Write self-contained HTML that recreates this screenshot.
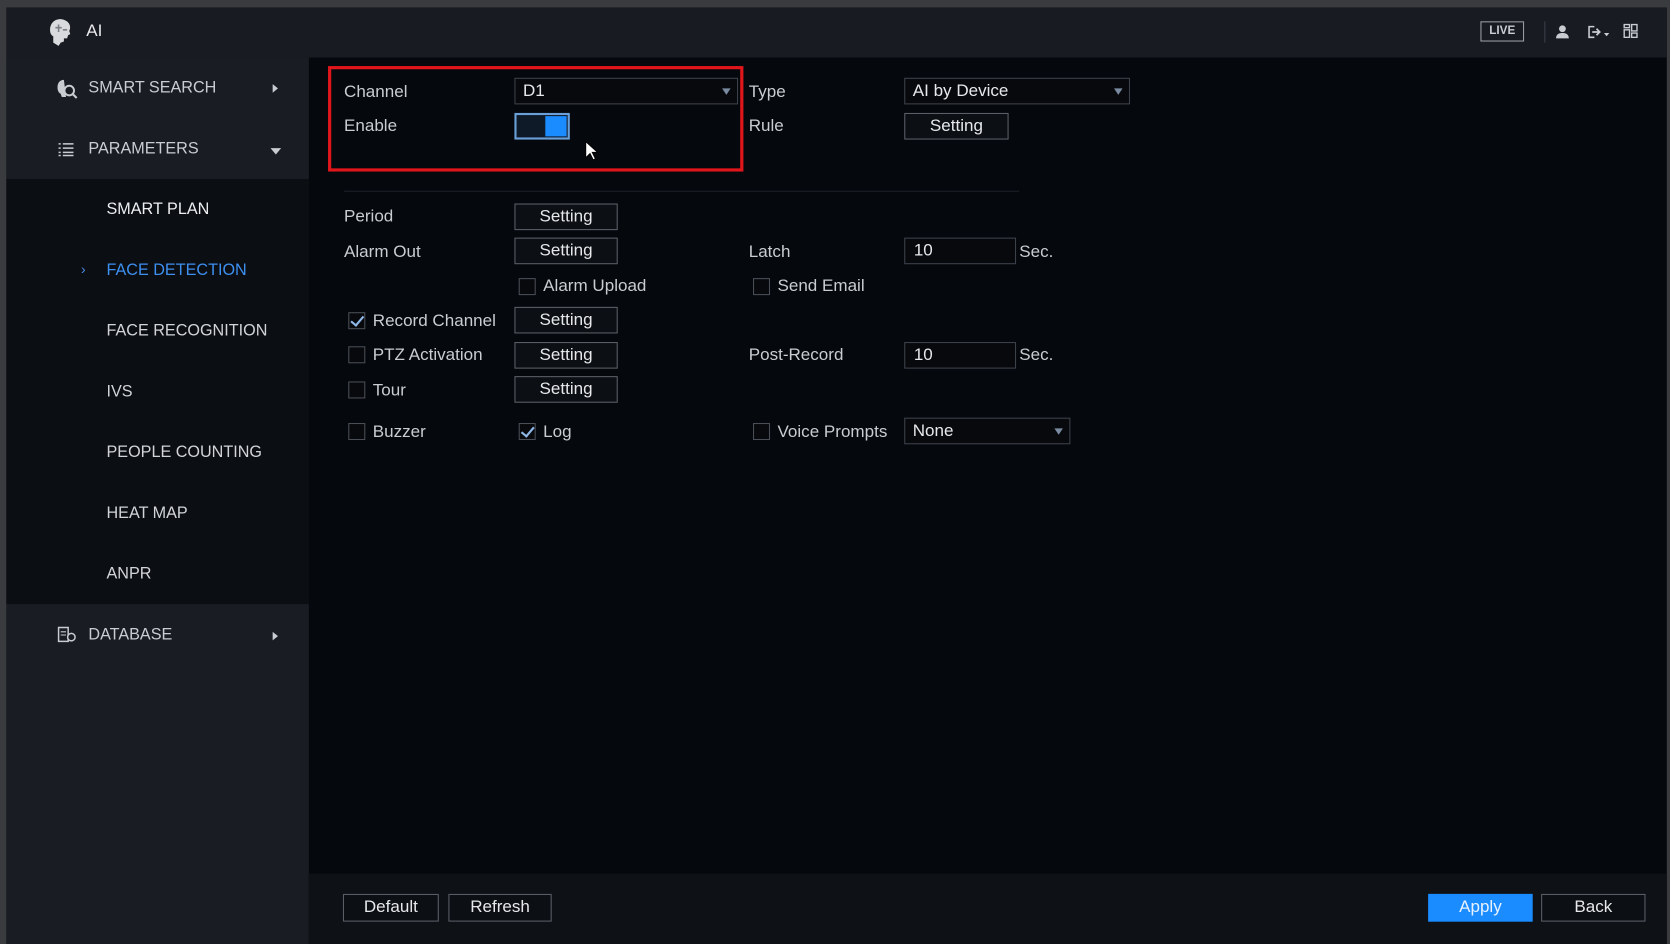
<!DOCTYPE html>
<html><head><meta charset="utf-8"><style>
*{margin:0;padding:0;box-sizing:border-box}
html,body{width:1670px;height:944px;overflow:hidden;background:#3a3b3e}
#s{position:absolute;left:0;top:0;width:1568px;height:886px;transform:scale(1.06505,1.06546);transform-origin:0 0;font-family:"Liberation Sans",sans-serif;color:#c9ccd1;font-size:16px}
.a{position:absolute}
.t{position:absolute;white-space:nowrap;line-height:20px}
.btn{position:absolute;border:1px solid #5a5e66;background:#0c0f14;color:#e6e8ea;text-align:center;font-size:16px;line-height:24px;height:25px}
.dd{position:absolute;border:1px solid #3d414a;background:#07090d;color:#e6e8ea;height:25px;line-height:24px;padding-left:7px;font-size:16px}
.dd:after{content:"";position:absolute;right:6px;top:9px;border-left:4px solid transparent;border-right:4px solid transparent;border-top:6px solid #7a8aa0}
.dd.n:after{display:none}
.cb{position:absolute;width:16px;height:16px;border:1px solid #4a4e56;background:#07090d}
.cb.on:after{content:"";position:absolute;left:4px;top:0px;width:5px;height:10px;border-right:2px solid #8fb8e8;border-bottom:2px solid #8fb8e8;transform:rotate(40deg)}
.side{position:absolute;left:100px;font-size:15.2px;color:#d2d4d8}
</style></head><body><div id="s">
<div class="a" style="left:6px;top:7px;width:1559px;height:879px;background:#05080d"></div>
<div class="a" style="left:6px;top:7px;width:1559px;height:47px;background:#181b22"></div>
<svg class="a" style="left:44px;top:16px" width="26" height="28" viewBox="0 0 26 28"><path d="M13 2C6 2 3 7 3 12c0 3 1 5 3 6v6l5 3 2-3 3-1v-3h3l1-3 2-1-1-3c2-3 1-10-8-11z" fill="#d8dadd"/><path d="M8 10h6M11 7v7M15 12h4" stroke="#7b7f86" stroke-width="1.5"/></svg>
<div class="t" style="left:81px;top:20px;color:#e8e9eb">AI</div>
<div class="a" style="left:1390px;top:20px;width:41px;height:19px;border:1.5px solid #9a9da2;font-size:11px;font-weight:bold;color:#c9ccd1;text-align:center;line-height:16px">LIVE</div>
<div class="a" style="left:1450px;top:20px;width:1px;height:20px;background:#3a3e46"></div>
<svg class="a" style="left:1460px;top:23px" width="14" height="14"><circle cx="7" cy="4" r="3.2" fill="#c9ccd1"/><path d="M1 13c0-4 3-5 6-5s6 1 6 5z" fill="#c9ccd1"/></svg>
<svg class="a" style="left:1490px;top:23px" width="24" height="14"><path d="M7 2H2v10h5" stroke="#c9ccd1" fill="none" stroke-width="1.5"/><path d="M5 7h6M9 4l3 3-3 3" stroke="#c9ccd1" fill="none" stroke-width="1.6"/><path d="M16 8h5l-2.5 3z" fill="#c9ccd1"/></svg>
<svg class="a" style="left:1524px;top:22px" width="14" height="15"><path d="M1 1h5v3H1zM8 1h5v6H8zM1 6h5v7H1zM8 9h5v4H8z" fill="none" stroke="#c9ccd1" stroke-width="1.3"/></svg>
<div class="a" style="left:6px;top:54px;width:284px;height:832px;background:#191c23"></div>
<div class="a" style="left:6px;top:168px;width:284px;height:399px;background:#0b0e13"></div>
<svg class="a" style="left:52px;top:73px" width="22" height="20"><path d="M8 2c-4 0-6 3-6 7 0 3 1 5 3 6l1 3h4" fill="#c9ccd1"/><circle cx="13" cy="12" r="4.5" stroke="#c9ccd1" stroke-width="1.8" fill="none"/><path d="M16 15l4 4" stroke="#c9ccd1" stroke-width="2"/></svg>
<div class="t" style="left:83px;top:73px;font-size:15.2px">SMART SEARCH</div>
<div class="a" style="left:256px;top:79px;border-top:4px solid transparent;border-bottom:4px solid transparent;border-left:5px solid #c9ccd1"></div>
<svg class="a" style="left:54px;top:133px" width="16" height="14"><path d="M1 2h2M5 2h10M1 6h2M5 6h10M1 10h2M5 10h10M1 13h2M5 13h10" stroke="#c9ccd1" stroke-width="1.4"/></svg>
<div class="t" style="left:83px;top:130px;font-size:15.2px">PARAMETERS</div>
<div class="a" style="left:254px;top:139px;border-left:5px solid transparent;border-right:5px solid transparent;border-top:6px solid #c9ccd1"></div>
<div class="t side" style="top:187px;color:#eceef0">SMART PLAN</div>
<div class="t" style="left:76px;top:243px;font-size:13px;color:#4a8ee8">›</div>
<div class="t side" style="top:244px;color:#3d8ff0">FACE DETECTION</div>
<div class="t side" style="top:301px">FACE RECOGNITION</div>
<div class="t side" style="top:358px">IVS</div>
<div class="t side" style="top:415px">PEOPLE COUNTING</div>
<div class="t side" style="top:472px">HEAT MAP</div>
<div class="t side" style="top:529px">ANPR</div>
<svg class="a" style="left:53px;top:587px" width="20" height="17"><path d="M2 2h9v13H2z" stroke="#c9ccd1" stroke-width="1.4" fill="none"/><path d="M4 6h5M4 9h5" stroke="#c9ccd1"/><circle cx="14" cy="11" r="3.5" stroke="#c9ccd1" stroke-width="1.4" fill="#191c23"/></svg>
<div class="t" style="left:83px;top:586px;font-size:15.2px">DATABASE</div>
<div class="a" style="left:256px;top:593px;border-top:4px solid transparent;border-bottom:4px solid transparent;border-left:5px solid #c9ccd1"></div>
<div class="a" style="left:308px;top:62px;width:390px;height:99px;border:3px solid #e0161b"></div>
<div class="t" style="left:323px;top:77px">Channel</div>
<div class="dd" style="left:483px;top:73px;width:210px">D1</div>
<div class="t" style="left:323px;top:109px">Enable</div>
<div class="a" style="left:483px;top:106px;width:52px;height:25px;border:2px solid #6b9fd8;background:#0f1a28"></div>
<div class="a" style="left:512px;top:109px;width:20px;height:19px;background:#1a8cff"></div>
<svg class="a" style="left:549px;top:132px" width="14" height="20"><path d="M1 1v15l4-4 3 6 2-1-3-6h5z" fill="#fff" stroke="#000" stroke-width=".8"/></svg>
<div class="t" style="left:703px;top:77px">Type</div>
<div class="dd" style="left:849px;top:73px;width:212px">AI by Device</div>
<div class="t" style="left:703px;top:109px">Rule</div>
<div class="btn" style="left:849px;top:106px;width:98px">Setting</div>
<div class="a" style="left:323px;top:179px;width:634px;height:1px;background:#1c2027"></div>
<div class="t" style="left:323px;top:194px">Period</div>
<div class="btn" style="left:483px;top:191px;width:97px">Setting</div>
<div class="t" style="left:323px;top:227px">Alarm Out</div>
<div class="btn" style="left:483px;top:223px;width:97px">Setting</div>
<div class="t" style="left:703px;top:227px">Latch</div>
<div class="dd n" style="left:849px;top:223px;width:105px;padding-left:8px">10</div>
<div class="t" style="left:957px;top:227px">Sec.</div>
<div class="cb" style="left:487px;top:261px"></div>
<div class="t" style="left:510px;top:259px">Alarm Upload</div>
<div class="cb" style="left:707px;top:261px"></div>
<div class="t" style="left:730px;top:259px">Send Email</div>
<div class="cb on" style="left:327px;top:293px"></div>
<div class="t" style="left:350px;top:292px">Record Channel</div>
<div class="btn" style="left:483px;top:288px;width:97px">Setting</div>
<div class="cb" style="left:327px;top:325px"></div>
<div class="t" style="left:350px;top:324px">PTZ Activation</div>
<div class="btn" style="left:483px;top:321px;width:97px">Setting</div>
<div class="t" style="left:703px;top:324px">Post-Record</div>
<div class="dd n" style="left:849px;top:321px;width:105px;padding-left:8px">10</div>
<div class="t" style="left:957px;top:324px">Sec.</div>
<div class="cb" style="left:327px;top:358px"></div>
<div class="t" style="left:350px;top:357px">Tour</div>
<div class="btn" style="left:483px;top:353px;width:97px">Setting</div>
<div class="cb" style="left:327px;top:397px"></div>
<div class="t" style="left:350px;top:396px">Buzzer</div>
<div class="cb on" style="left:487px;top:397px"></div>
<div class="t" style="left:510px;top:396px">Log</div>
<div class="cb" style="left:707px;top:397px"></div>
<div class="t" style="left:730px;top:396px">Voice Prompts</div>
<div class="dd" style="left:849px;top:392px;width:156px">None</div>
<div class="a" style="left:290px;top:820px;width:1275px;height:66px;background:#0e1116"></div>
<div class="btn" style="left:322px;top:839px;width:90px;height:26px">Default</div>
<div class="btn" style="left:421px;top:839px;width:97px;height:26px">Refresh</div>
<div class="btn" style="left:1341px;top:839px;width:98px;height:26px;background:#1a8cff;border-color:#1a8cff;color:#e8f2ff">Apply</div>
<div class="btn" style="left:1447px;top:839px;width:98px;height:26px">Back</div>
</div>
</body></html>
